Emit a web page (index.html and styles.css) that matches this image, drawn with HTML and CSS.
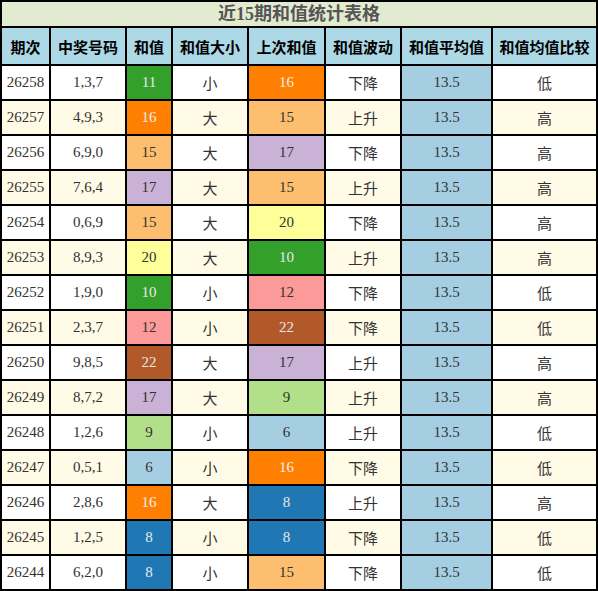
FILE: index.html
```html
<!DOCTYPE html>
<html lang="zh-CN">

<head>
    <meta charset="UTF-8">
    <meta name="viewport" content="width=device-width, initial-scale=1.0">
    <title>近15期和值统计表格</title>
    <link rel="stylesheet" href="styles.css">
</head>

<body>
    <table class="stats">
        <colgroup>
            <col class="c-issue">
            <col class="c-nums">
            <col class="c-sum">
            <col class="c-size">
            <col class="c-prev">
            <col class="c-wave">
            <col class="c-avg">
            <col class="c-cmp">
        </colgroup>
        <thead>
            <tr>
                <th class="title" colspan="8">近15期和值统计表格</th>
            </tr>
            <tr class="head">
                <th>期次</th>
                <th>中奖号码</th>
                <th>和值</th>
                <th>和值大小</th>
                <th>上次和值</th>
                <th>和值波动</th>
                <th>和值平均值</th>
                <th>和值均值比较</th>
            </tr>
        </thead>
        <tbody>
            <tr>
                <td class="num">26258</td><td class="num">1,3,7</td>
                <td class="num v11">11</td><td class="zh">小</td>
                <td class="num v16">16</td><td class="zh">下降</td>
                <td class="num avg">13.5</td><td class="zh">低</td>
            </tr>
            <tr>
                <td class="num">26257</td><td class="num">4,9,3</td>
                <td class="num v16">16</td><td class="zh">大</td>
                <td class="num v15">15</td><td class="zh">上升</td>
                <td class="num avg">13.5</td><td class="zh">高</td>
            </tr>
            <tr>
                <td class="num">26256</td><td class="num">6,9,0</td>
                <td class="num v15">15</td><td class="zh">大</td>
                <td class="num v17">17</td><td class="zh">下降</td>
                <td class="num avg">13.5</td><td class="zh">高</td>
            </tr>
            <tr>
                <td class="num">26255</td><td class="num">7,6,4</td>
                <td class="num v17">17</td><td class="zh">大</td>
                <td class="num v15">15</td><td class="zh">上升</td>
                <td class="num avg">13.5</td><td class="zh">高</td>
            </tr>
            <tr>
                <td class="num">26254</td><td class="num">0,6,9</td>
                <td class="num v15">15</td><td class="zh">大</td>
                <td class="num v20">20</td><td class="zh">下降</td>
                <td class="num avg">13.5</td><td class="zh">高</td>
            </tr>
            <tr>
                <td class="num">26253</td><td class="num">8,9,3</td>
                <td class="num v20">20</td><td class="zh">大</td>
                <td class="num v10">10</td><td class="zh">上升</td>
                <td class="num avg">13.5</td><td class="zh">高</td>
            </tr>
            <tr>
                <td class="num">26252</td><td class="num">1,9,0</td>
                <td class="num v10">10</td><td class="zh">小</td>
                <td class="num v12">12</td><td class="zh">下降</td>
                <td class="num avg">13.5</td><td class="zh">低</td>
            </tr>
            <tr>
                <td class="num">26251</td><td class="num">2,3,7</td>
                <td class="num v12">12</td><td class="zh">小</td>
                <td class="num v22">22</td><td class="zh">下降</td>
                <td class="num avg">13.5</td><td class="zh">低</td>
            </tr>
            <tr>
                <td class="num">26250</td><td class="num">9,8,5</td>
                <td class="num v22">22</td><td class="zh">大</td>
                <td class="num v17">17</td><td class="zh">上升</td>
                <td class="num avg">13.5</td><td class="zh">高</td>
            </tr>
            <tr>
                <td class="num">26249</td><td class="num">8,7,2</td>
                <td class="num v17">17</td><td class="zh">大</td>
                <td class="num v9">9</td><td class="zh">上升</td>
                <td class="num avg">13.5</td><td class="zh">高</td>
            </tr>
            <tr>
                <td class="num">26248</td><td class="num">1,2,6</td>
                <td class="num v9">9</td><td class="zh">小</td>
                <td class="num v6">6</td><td class="zh">上升</td>
                <td class="num avg">13.5</td><td class="zh">低</td>
            </tr>
            <tr>
                <td class="num">26247</td><td class="num">0,5,1</td>
                <td class="num v6">6</td><td class="zh">小</td>
                <td class="num v16">16</td><td class="zh">下降</td>
                <td class="num avg">13.5</td><td class="zh">低</td>
            </tr>
            <tr>
                <td class="num">26246</td><td class="num">2,8,6</td>
                <td class="num v16">16</td><td class="zh">大</td>
                <td class="num v8">8</td><td class="zh">上升</td>
                <td class="num avg">13.5</td><td class="zh">高</td>
            </tr>
            <tr>
                <td class="num">26245</td><td class="num">1,2,5</td>
                <td class="num v8">8</td><td class="zh">小</td>
                <td class="num v8">8</td><td class="zh">下降</td>
                <td class="num avg">13.5</td><td class="zh">低</td>
            </tr>
            <tr>
                <td class="num">26244</td><td class="num">6,2,0</td>
                <td class="num v8">8</td><td class="zh">小</td>
                <td class="num v15">15</td><td class="zh">下降</td>
                <td class="num avg">13.5</td><td class="zh">低</td>
            </tr>
        </tbody>
    </table>
</body>

</html>
```

FILE: styles.css
```css
* {
    margin: 0;
    padding: 0;
    box-sizing: border-box;
}

body {
    background-color: #fff;
    font-family: "Noto Sans CJK SC", sans-serif;
}

.stats {
    width: 598px;
    table-layout: fixed;
    border-collapse: separate;
    border-spacing: 2px;
    background-color: #000;
}

.c-issue { width: 47px; }
.c-nums  { width: 74px; }
.c-sum   { width: 44px; }
.c-size  { width: 74px; }
.c-prev  { width: 75px; }
.c-wave  { width: 74px; }
.c-avg   { width: 89px; }
.c-cmp   { width: 103px; }

.stats th,
.stats td {
    padding: 0;
    text-align: center;
    vertical-align: middle;
    white-space: nowrap;
    overflow: hidden;
}

.title {
    height: 24px;
    background-color: #e2ebcf;
    color: #555;
    font-family: "Liberation Serif", "Noto Sans CJK SC", serif;
    font-size: 18px;
    font-weight: 700;
    line-height: 24px;
}

.head th {
    height: 36px;
    background-color: #add8e6;
    color: #000;
    font-size: 15px;
    font-weight: 700;
}

.stats td {
    height: 33px;
    background-color: #fff;
    color: #333;
}

.stats tbody tr:nth-child(even) td {
    background-color: #fffbe6;
}

.num {
    font-family: "Liberation Serif", "DejaVu Serif", serif;
    font-size: 15px;
}

.zh {
    font-size: 15px;
    color: #000;
}

/* sum colours */
.stats tbody tr td.avg { background-color: #a6cee3; }
.stats tbody tr td.v6  { background-color: #a6cee3; }
.stats tbody tr td.v8  { background-color: #1f78b4; color: #e8e8e8; }
.stats tbody tr td.v9  { background-color: #b2df8a; }
.stats tbody tr td.v10 { background-color: #33a02c; color: #e8e8e8; }
.stats tbody tr td.v11 { background-color: #33a02c; color: #e8e8e8; }
.stats tbody tr td.v12 { background-color: #fb9a99; }
.stats tbody tr td.v15 { background-color: #fdbf6f; }
.stats tbody tr td.v16 { background-color: #ff7f00; color: #f0f0f0; }
.stats tbody tr td.v17 { background-color: #cab2d6; }
.stats tbody tr td.v20 { background-color: #ffff99; }
.stats tbody tr td.v22 { background-color: #b15928; color: #e8e8e8; }
```
